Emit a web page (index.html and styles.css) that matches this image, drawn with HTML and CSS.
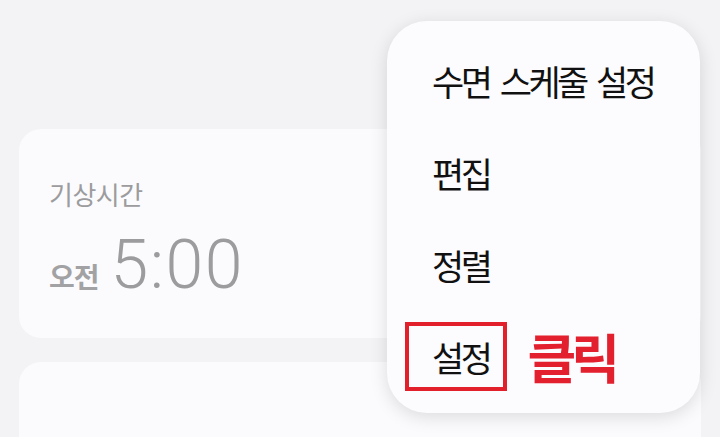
FILE: index.html
```html
<!DOCTYPE html>
<html lang="ko">
<head>
  <meta charset="UTF-8" />
  <meta name="viewport" content="width=device-width, initial-scale=1.0"/>
  <title>알람 – 메뉴</title>
  <link rel="stylesheet" href="styles.css">
</head>
<body>
  <div class="screen">
    <div class="alarm-list">
      <div class="card">
        <p class="card-label">기상시간</p>
        <div class="card-time">
          <span class="ampm">오전</span>
          <span class="clock">5:00</span>
        </div>
      </div>
      <div class="card card-empty"></div>
    </div>

    <ul class="menu">
      <li class="menu-item">수면 스케줄 설정</li>
      <li class="menu-item">편집</li>
      <li class="menu-item">정렬</li>
      <li class="menu-item">
        <span class="boxed">설정</span>
        <span class="click-note">클릭</span>
      </li>
    </ul>
  </div>
</body>
</html>
```

FILE: styles.css
```css
html, body {
  margin: 0;
  padding: 0;
}

body {
  font-family: 'Noto Sans CJK KR', 'Noto Sans', sans-serif;
  background: #f3f3f5;
}

.screen {
  position: relative;
  width: 720px;
  height: 437px;
  overflow: hidden;
}

.alarm-list {
  padding: 129px 19px 0 19px;
  display: flex;
  flex-direction: column;
  gap: 24px;
}

.card {
  background: #fbfbfd;
  border-radius: 22px;
  height: 209px;
  padding: 50px 0 0 30px;
  box-sizing: border-box;
}

.card-empty {
  height: 75px;
  border-radius: 22px 22px 0 0;
}

.card-label {
  margin: 0;
  font-size: 26px;
  letter-spacing: -0.5px;
  color: #9c9c9e;
  line-height: 30px;
}

.card-time {
  display: flex;
  align-items: baseline;
  margin-top: 22px;
}

.ampm {
  font-size: 28px;
  font-weight: 700;
  color: #a2a2a4;
  letter-spacing: -1px;
}

.clock {
  font-family: Roboto, 'Noto Sans', sans-serif;
  font-weight: 300;
  font-size: 68px;
  letter-spacing: 1.5px;
  color: #9c9c9e;
  margin-left: 12px;
  line-height: 1;
}

/* popup menu, lies over the list */
.menu {
  position: absolute;
  top: 21px;
  left: 387px;
  width: 313px;
  height: 392px;
  margin: 0;
  padding: 13px 0 11px 45px;
  box-sizing: border-box;
  list-style: none;
  background: #fcfbfe;
  border-radius: 40px;
  box-shadow: 0 4px 18px rgba(0, 0, 0, 0.13);
}

.menu-item {
  height: 92px;
  display: flex;
  align-items: center;
  font-size: 35px;
  letter-spacing: -3.5px;
  word-spacing: 4px;
  color: #111;
}

.boxed {
  border: 4px solid #e2202b;
  margin-left: -27px;
  padding: 0 14px 0 23px;
  height: 61px;
  display: flex;
  align-items: center;
}

.click-note {
  margin-left: 20px;
  font-size: 53px;
  font-weight: 700;
  letter-spacing: -5px;
  color: #e3202e;
}
```
